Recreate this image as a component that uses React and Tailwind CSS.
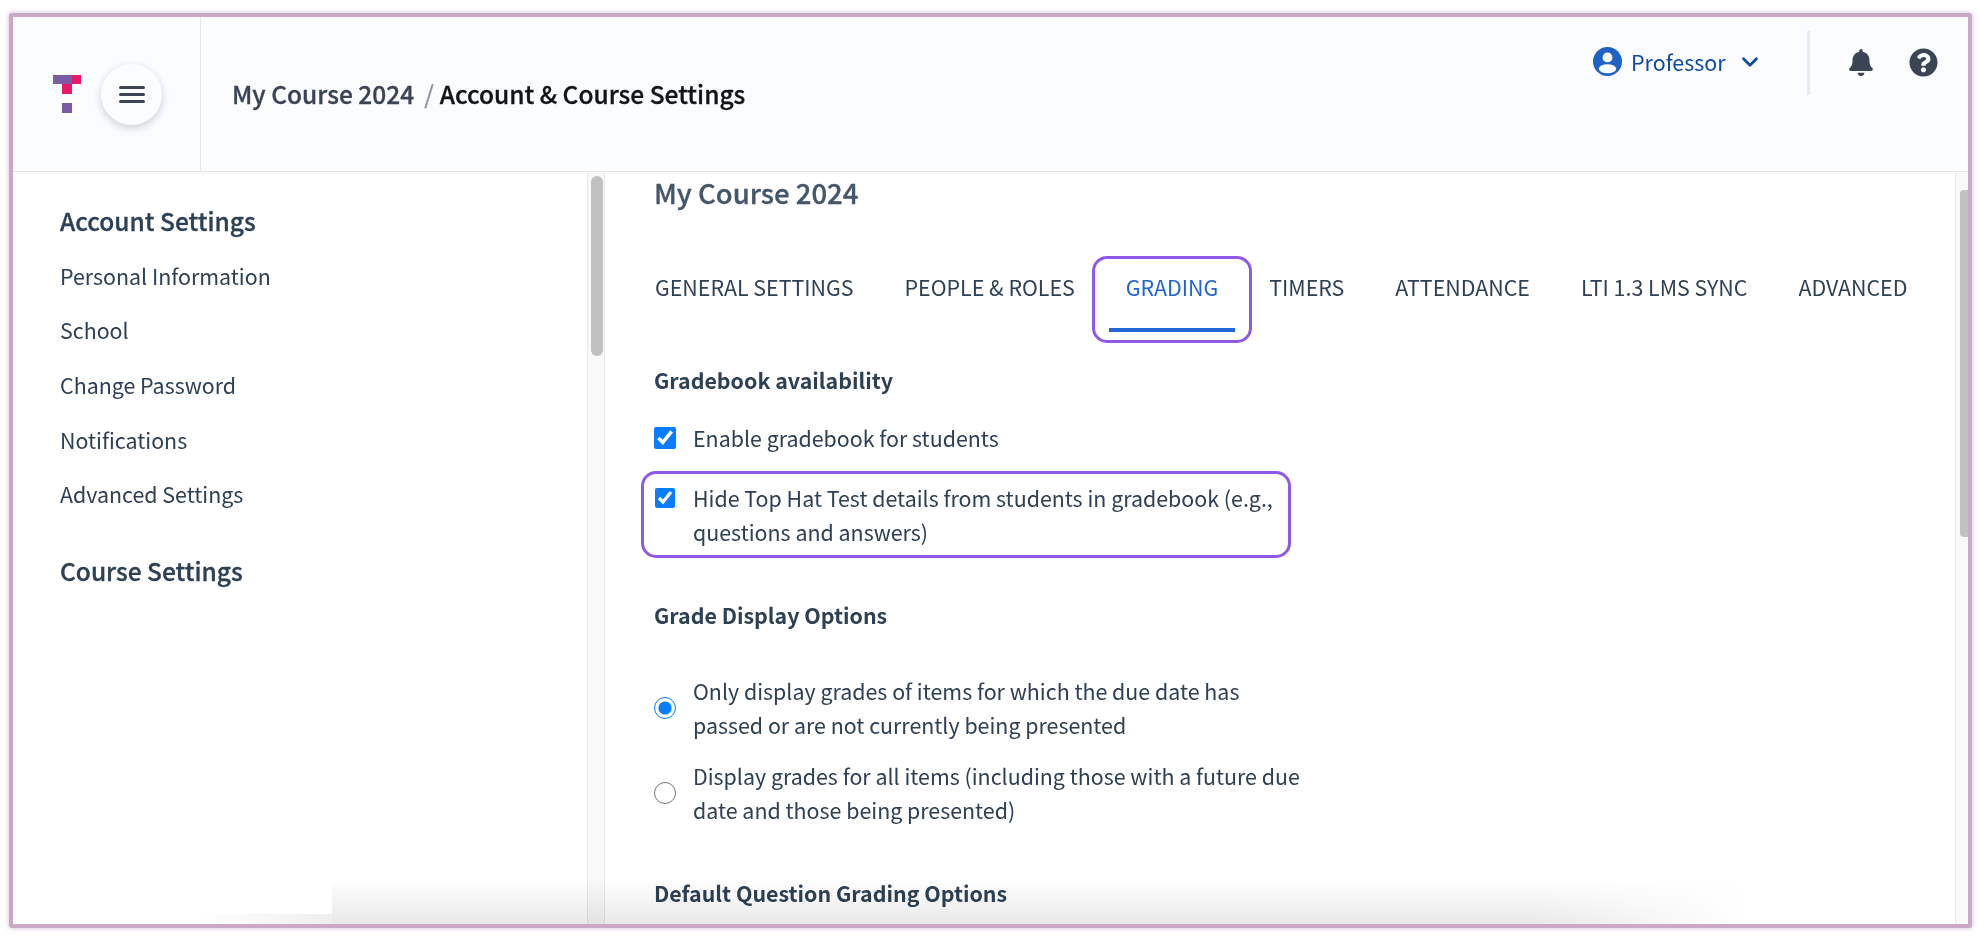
import { ChevronDown } from "lucide-react";
import { FaBell, FaQuestionCircle } from "react-icons/fa";

const sideItems = ["Personal Information", "School", "Change Password", "Notifications", "Advanced Settings"];
const tabs = ["GENERAL SETTINGS", "PEOPLE & ROLES", "GRADING", "TIMERS", "ATTENDANCE", "LTI 1.3 LMS SYNC", "ADVANCED"];

function Scrollbar({ className, thumbClass }) {
  return (
    <div className={`shrink-0 bg-[#f9f9f9] border-l border-[#e8e8e8] ${className}`}>
      <div className={`bg-[#c1c1c1] ${thumbClass}`}></div>
    </div>
  );
}

function Logo() {
  return (
    <svg width="28" height="38" viewBox="0 0 28 38">
      <rect x="0" y="0" width="19" height="9" fill="#7b5aa6" />
      <rect x="19" y="0" width="9" height="9" fill="#e8196b" />
      <rect x="9" y="9" width="10" height="10" fill="#e8196b" />
      <rect x="9" y="28" width="10" height="10" fill="#7b5aa6" />
    </svg>
  );
}

function UserIcon() {
  return (
    <svg width="29" height="29" viewBox="0 0 24 24">
      <circle cx="12" cy="12" r="12" fill="#1d62c4" />
      <circle cx="12" cy="8.6" r="4.1" fill="#fbfcfe" />
      <ellipse cx="12" cy="18" rx="7.2" ry="3.7" fill="#fbfcfe" />
    </svg>
  );
}

export default function App() {
  return (
    <div className="w-[1980px] h-[938px] overflow-hidden bg-white pt-[13px] pl-[9px] font-['Noto_Sans_CJK_SC',sans-serif] text-[#2d4054]">
      <div className="w-[1963px] h-[915px] flex flex-col border-4 border-[#c9a8c8] rounded-[3px] bg-white shadow-[0_0_5px_rgba(150,100,150,0.45)] overflow-hidden">
        {/* Header */}
        <header className="h-[155px] shrink-0 flex bg-[#fbfcfe] border-b border-[#e5e7eb]">
          <div className="w-[188px] shrink-0 flex items-center gap-[20px] pl-[40px] border-r border-[#e5e7eb]">
            <Logo />
            <button className="w-[61px] h-[61px] rounded-full bg-[#fbfcfe] flex flex-col items-center justify-center gap-[4px] shadow-[0_3px_8px_rgba(0,0,0,0.18)]">
              <span className="block w-[26px] h-[3px] rounded-full bg-[#3a4455]"></span>
              <span className="block w-[26px] h-[3px] rounded-full bg-[#3a4455]"></span>
              <span className="block w-[26px] h-[3px] rounded-full bg-[#3a4455]"></span>
            </button>
          </div>
          <div className="flex-1 flex items-center pl-[31px] text-[24.5px] font-medium [-webkit-text-stroke:0.3px]">
            <span className="text-[#3a4455]">My Course 2024</span>
            <span className="text-[#8a93a0] ml-[10px] mr-[6px] font-normal">/</span>
            <span className="text-[#111418]">Account &amp; Course Settings</span>
          </div>
          <div className="flex items-center self-start mt-[14px] h-[64px] pr-[30px]">
            <div className="flex items-center pb-[2px] text-[#0f4aa3] text-[21.4px]">
              <UserIcon />
              <span className="ml-[9px]">Professor</span>
              <ChevronDown className="w-[26px] h-[26px] ml-[11px] text-[#0f4aa3]" strokeWidth={2.5} />
            </div>
            <div className="w-[3px] h-[64px] bg-[#e8eaed] ml-[44.5px]"></div>
            <div className="flex items-center pb-[1px]">
              <FaBell className="w-[24px] h-[27px] ml-[39px] text-[#3a4455]" />
              <FaQuestionCircle className="w-[29px] h-[29px] ml-[36px] text-[#3a4455]" />
            </div>
          </div>
        </header>

        <div className="relative flex-1 min-h-0 flex">
          {/* Sidebar */}
          <aside className="w-[574px] shrink-0 pl-[47px] pt-[34px]">
            <h2 className="text-[24.5px] leading-[30px] font-medium [-webkit-text-stroke:0.3px]">Account Settings</h2>
            <ul className="mt-[24.5px] flex flex-col gap-[24.7px]">
              {sideItems.map((item) => (
                <li key={item} className="text-[21.4px] leading-[30px]">{item}</li>
              ))}
            </ul>
            <h2 className="mt-[47px] text-[24.5px] leading-[30px] font-medium [-webkit-text-stroke:0.3px]">Course Settings</h2>
          </aside>
          <Scrollbar className="w-[18px] border-r pt-[4px]" thumbClass="w-[12px] h-[180px] ml-[3px] rounded-full" />

          {/* Main */}
          <main className="flex-1 min-w-0 pl-[49px] overflow-hidden">
            <h1 className="pt-[2px] text-[27.5px] leading-[36px] font-medium [-webkit-text-stroke:0.3px] text-[#43566a]">My Course 2024</h1>
            <nav className="mt-[62px] -ml-[16px] flex gap-[17px] text-[21.4px] leading-[30px]">
              {tabs.map((tab) => (
                <div key={tab} className="relative px-[17px]">
                  <div className={`pb-[26px] border-b-4 ${tab === "GRADING" ? "-mx-[17px] px-[17px] text-[#1f63d4] border-[#2168d6]" : "border-transparent"}`}>
                    {tab}
                  </div>
                  {tab === "GRADING" && (
                    <span className="absolute -left-[17px] -right-[17px] -top-[16px] -bottom-[11px] border-[3px] border-[#9157e6] rounded-[15px]"></span>
                  )}
                </div>
              ))}
            </nav>

            <h3 className="mt-[34px] text-[21.4px] leading-[28px] font-bold">Gradebook availability</h3>
            <label className="mt-[27px] flex text-[21.4px] leading-[34px]">
              <input type="checkbox" defaultChecked className="w-[22px] h-[22px] shrink-0 mt-[6px] accent-[#0a7cff]" />
              <span className="ml-[17px]">Enable gradebook for students</span>
            </label>
            <label className="relative mt-[26px] flex text-[21.4px] leading-[34px] w-[630px]">
              <input type="checkbox" defaultChecked className="w-[20px] h-[20px] shrink-0 mt-[7px] ml-[1px] accent-[#0a7cff]" />
              <span className="ml-[18px]">Hide Top Hat Test details from students in gradebook (e.g., questions and answers)</span>
              <span className="absolute -left-[13px] -right-[7px] -top-[10px] -bottom-[9px] border-[3px] border-[#9157e6] rounded-[15px]"></span>
            </label>

            <h3 className="mt-[52px] text-[21.4px] leading-[28px] font-bold">Grade Display Options</h3>
            <label className="mt-[45px] flex items-center text-[21.4px] leading-[34px] w-[650px]">
              <input type="radio" name="display" defaultChecked className="w-[22px] h-[22px] shrink-0 accent-[#0a7cff]" />
              <span className="ml-[17px]">Only display grades of items for which the due date has passed or are not currently being presented</span>
            </label>
            <label className="mt-[17px] flex items-center text-[21.4px] leading-[34px] w-[650px]">
              <input type="radio" name="display" className="w-[22px] h-[22px] shrink-0 accent-[#0a7cff]" />
              <span className="ml-[17px]">Display grades for all items (including those with a future due date and those being presented)</span>
            </label>

            <h3 className="mt-[52px] text-[21.4px] leading-[28px] font-bold">Default Question Grading Options</h3>
          </main>
          <Scrollbar className="w-[13px] pt-[18px]" thumbClass="w-[8px] h-[347px] ml-[4px] rounded-l-[4px]" />

          {/* Shadow along the bottom edge */}
          <div className="absolute left-[319px] right-[220px] bottom-0 h-[46px] pointer-events-none mix-blend-multiply bg-gradient-to-t from-[#e9e9e9] to-transparent [mask-image:linear-gradient(to_right,black_85%,transparent)]"></div>
          <div className="absolute left-[190px] w-[129px] bottom-0 h-[10px] pointer-events-none mix-blend-multiply bg-gradient-to-r from-transparent to-[#eeeeee]"></div>
        </div>
      </div>
    </div>
  );
}
